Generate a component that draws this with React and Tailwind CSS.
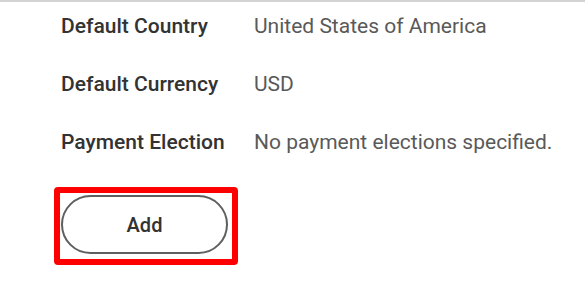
export default function App() {
  const rows = [
    ["Default Country", "United States of America"],
    ["Default Currency", "USD"],
    ["Payment Election", "No payment elections specified."],
  ];
  const medium = { fontFamily: "'Roboto Medium', Roboto, 'Liberation Sans', sans-serif" };
  return (
    <div
      className="w-[585px] h-[306px] bg-white border-t-2 border-[#d4d4d4] overflow-hidden"
      style={{ fontFamily: "Roboto, 'Liberation Sans', sans-serif" }}
    >
      <div className="pl-[61px] pt-[12px] flex flex-col gap-[34px]">
        {rows.map(([k, v]) => (
          <div key={k} className="flex text-[21px] leading-[24px]">
            <div className="w-[193px] font-medium text-[#333333]" style={medium}>{k}</div>
            <div className="text-[#595959]">{v}</div>
          </div>
        ))}
      </div>
      <div className="ml-[54px] mt-[33px] w-[184px] h-[78px] border-[6px] border-[#ff0000] rounded-[4px] pl-[1px] pt-[2px]">
        <button
          className="w-[167px] h-[59px] rounded-full border-2 border-[#5f5f5f] bg-white text-[20px] font-medium text-[#333333] flex items-center justify-center"
          style={medium}
        >
          Add
        </button>
      </div>
    </div>
  );
}
